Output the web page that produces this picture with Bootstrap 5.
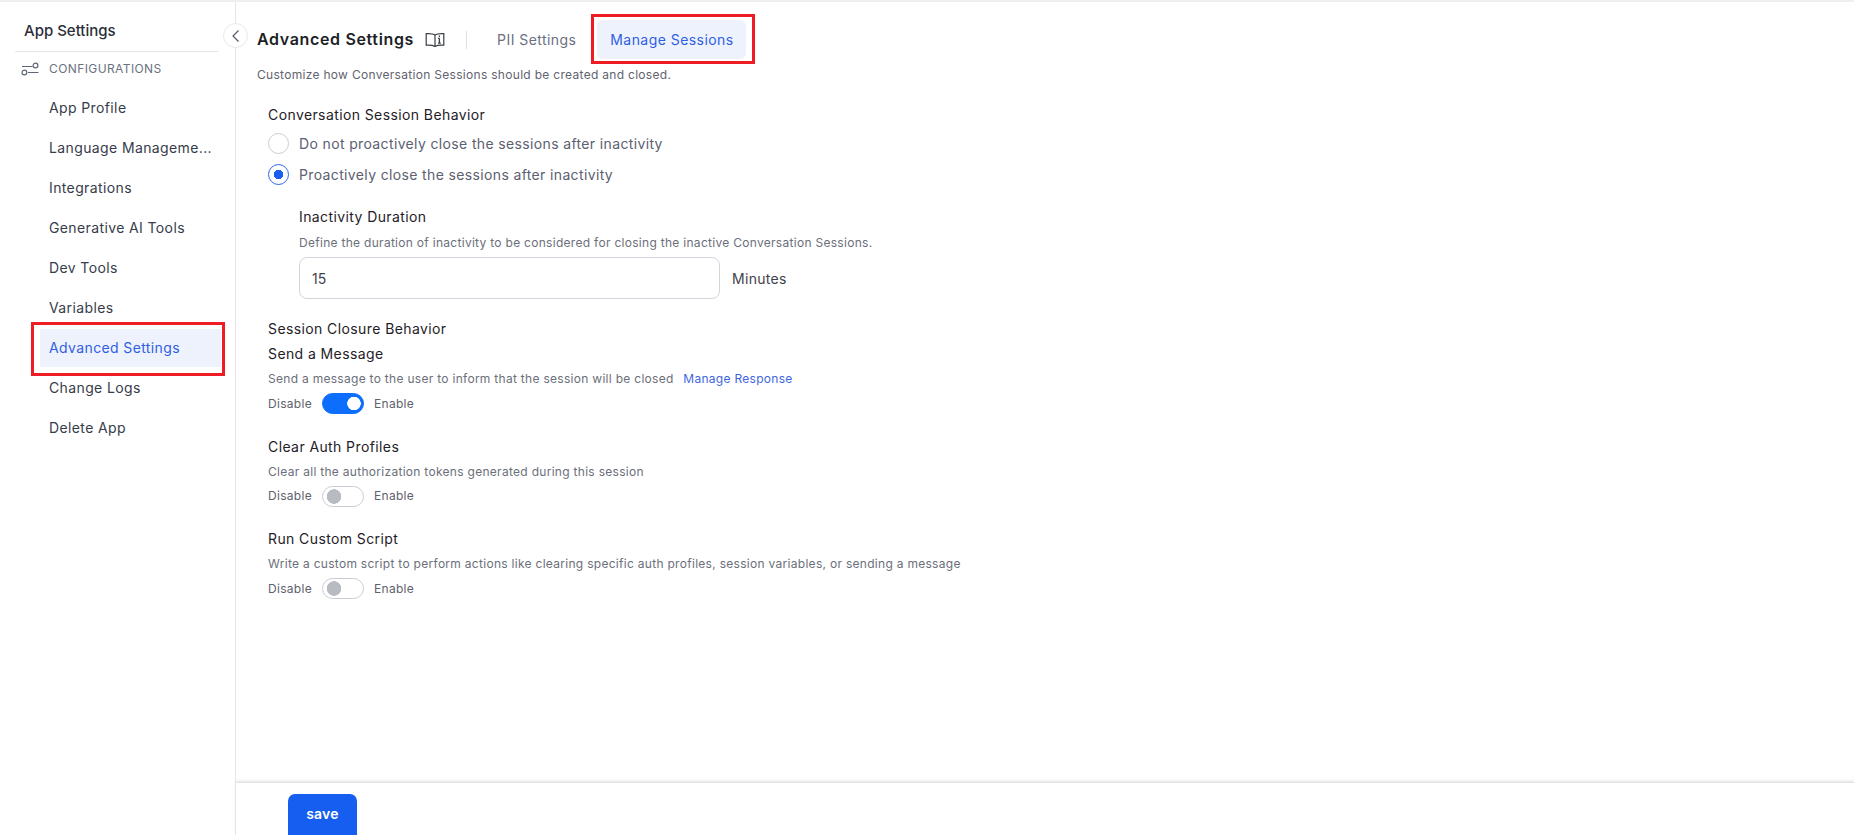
<!DOCTYPE html>
<html lang="en">
<head>
<meta charset="utf-8">
<title>App Settings</title>
<link href="https://cdn.jsdelivr.net/npm/bootstrap@5.3.0/dist/css/bootstrap.min.css" rel="stylesheet">
<style>
html,body{height:835px;overflow:hidden}
body{font-family:Inter,"Liberation Sans",sans-serif;color:#202124;background:#fff;font-size:14px}
.shell{height:835px;border-top:2px solid #eeeff1}
.side{width:236px;flex:none;border-right:1px solid #e4e6ea;position:relative;padding:0 17px 0 15px}
.side-title{font-size:15px;font-weight:500;color:#2b2f38;line-height:22px;padding:18px 0 9px 9px;border-bottom:1px solid #e4e6ea}
.collapse-btn{position:absolute;top:21px;right:-13px;width:25px;height:25px;border:1px solid #e8e9ed;border-radius:50%;background:#fff;padding:0;display:flex;align-items:center;justify-content:center}
.group-head{height:34px;padding-left:6px;gap:10px;font-size:12px;color:#6b7280;letter-spacing:.4px}
.menu{margin-top:3px;margin-left:25px;margin-right:-3px}
.menu-link{display:block;height:38px;margin-bottom:2px;line-height:38px;padding:0 0 0 9px;color:#363c4a;font-size:14px;font-weight:400;letter-spacing:.38px;white-space:nowrap;text-decoration:none;position:relative}
.menu-link.is-active{background:#eef2fd;color:#2f5fe3}
.mark-box{position:absolute;border:3px solid #ee1c25;pointer-events:none}
.menu-mark{top:-7px;left:-9px;right:-4px;bottom:-9px}
.tab-mark{top:-6px;left:-6px;right:-9px;bottom:-5px}
.main{min-width:0}
.content{padding:18px 21px 0 21px}
.head-row{height:39px}
.page-title{font-size:16px;font-weight:600;color:#1d1f25;margin:0;line-height:39px;letter-spacing:.65px}
.book-ico{margin-left:11px}
.vrule{width:1px;height:18px;background:#dfe1e6;margin:0 30px 0 21px}
.tab-plain{padding:0;color:#6a7080;font-size:14px;font-weight:400;letter-spacing:.45px;text-decoration:none;margin-right:21px}
.tab-on{display:block;position:relative;width:149px;height:39px;line-height:39px;text-align:center;background:#eef2fd;border-radius:6px;color:#2f5fe3;font-size:14px;font-weight:400;letter-spacing:.45px;text-decoration:none}
.subtitle{font-size:12px;color:#5f6470;line-height:16px;margin:8px 0 0;letter-spacing:.3px}
.form-area{padding-left:11px}
.label-main{font-size:14px;font-weight:400;color:#1f2127;line-height:20px;margin:0;letter-spacing:.4px}
.lead-label{margin-top:22px}
.hint{font-size:12px;color:#6b6f7a;line-height:16px;margin:0;letter-spacing:.29px}
.hint a{color:#3f66e0;text-decoration:none;margin-left:6px}
.radio-row{display:flex;align-items:center;gap:10px;height:31px;margin:0;padding:0;color:#5c6070;font-size:14px;letter-spacing:.36px}
.radio-group{margin-top:3px}
.radio-row .form-check-input{width:21px;height:21px;margin:0;flex:none;border:1px solid #c9ccd3;float:none}
.radio-row .form-check-input:checked{background-color:#fff;border-color:#2a66f0;background-image:radial-gradient(circle,#1a5ff0 0 4.5px,transparent 5px)}
.dur{padding-left:31px;margin-top:17px}
.dur .hint{margin-top:8px}
.dur-row{margin-top:6px;gap:12px;font-size:14px;color:#3f424c;letter-spacing:.3px}
.dur-input{width:421px;height:42px;border:1px solid #d3d5dc;border-radius:8px;padding:0 12px;font-size:14px;color:#3f424c;font-family:inherit}
.closure{margin-top:20px}
.blk{margin-top:5px}
.blk+.blk{margin-top:22px}
.blk .hint{margin-top:7px}
.tog-row{margin-top:5.5px;height:22px;font-size:12px;color:#5e626d;gap:10px;letter-spacing:.3px}
.tog-row .form-switch{padding:0;margin:0;min-height:0;display:flex}
.tog-row .form-check-input{width:42px;height:21px;margin:0;float:none;border:1px solid #c9ccd3;border-radius:11px;background-color:#fff;background-image:radial-gradient(circle at 11px 50%,#b9bbc2 0 7px,transparent 7.5px);background-size:auto;background-position:0 0}
.tog-row .form-check-input:checked{background-color:#0d6efd;border-color:#0d6efd;background-image:radial-gradient(circle at 31px 50%,#fff 0 6.5px,transparent 7px)}
.bottom{height:53px;overflow:hidden;border-top:1px solid #e2e3e6;box-shadow:0 -1px 3px rgba(0,0,0,.12);padding:11px 0 0 52px;flex:none}
.save-btn{width:69px;height:52px;background:#155eef;border:0;border-radius:7px;color:#fff;font-size:14px;font-weight:600;letter-spacing:.2px;padding:0 0 14px;display:block}
</style>
</head>
<body>
<div class="shell d-flex">
  <aside class="side">
    <div class="side-title">App Settings</div>
    <button class="collapse-btn" type="button" aria-label="Collapse">
      <svg width="10" height="14" viewBox="0 0 10 14" fill="none" stroke="#4b5060" stroke-width="1.1"><path d="M7.5 1.5 2 7l5.5 5.5"/></svg>
    </button>
    <div class="group-head d-flex align-items-center">
      <svg width="18" height="14" viewBox="0 0 18 14" fill="none" stroke="#5f6675" stroke-width="1.2"><path d="M1 4.5h10.5M7 10.5h10.5"/><circle cx="14.5" cy="3.5" r="2.4"/><circle cx="3.4" cy="10.5" r="2.4"/></svg>
      <span>CONFIGURATIONS</span>
    </div>
    <nav class="nav flex-column menu">
      <a class="menu-link" href="#">App Profile</a>
      <a class="menu-link" href="#">Language Manageme...</a>
      <a class="menu-link" href="#">Integrations</a>
      <a class="menu-link" href="#">Generative AI Tools</a>
      <a class="menu-link" href="#">Dev Tools</a>
      <a class="menu-link" href="#">Variables</a>
      <a class="menu-link is-active" href="#">Advanced Settings<span class="mark-box menu-mark"></span></a>
      <a class="menu-link" href="#">Change Logs</a>
      <a class="menu-link" href="#">Delete App</a>
    </nav>
  </aside>
  <main class="main flex-grow-1 d-flex flex-column">
    <div class="content flex-grow-1">
      <div class="head-row d-flex align-items-center">
        <h1 class="page-title">Advanced Settings</h1>
        <svg class="book-ico" width="20" height="16" viewBox="0 0 20 16" fill="none" stroke="#3a3d46" stroke-width="1.2"><path d="M10 3C8.5 1.8 6 1.4 1.2 1.6v11.6c4.6-.2 7 .1 8.8 1.3 1.8-1.2 4.2-1.5 8.8-1.3V1.6C14 1.4 11.5 1.8 10 3zM10 3v11.5"/><path d="M14.4 3.4v1.5M14.4 6.3v4.9M13 11.2h2.8M13 6.3h1.4" stroke-width="1.3"/></svg>
        <span class="vrule"></span>
        <a class="tab-plain" href="#">PII Settings</a>
        <a class="tab-on" href="#">Manage Sessions<span class="mark-box tab-mark"></span></a>
      </div>
      <p class="subtitle">Customize how Conversation Sessions should be created and closed.</p>
      <div class="form-area">
        <p class="label-main lead-label">Conversation Session Behavior</p>
        <div class="radio-group">
          <label class="radio-row form-check"><input class="form-check-input" type="radio" name="closing"><span>Do not proactively close the sessions after inactivity</span></label>
          <label class="radio-row form-check"><input class="form-check-input" type="radio" name="closing" checked><span>Proactively close the sessions after inactivity</span></label>
        </div>
        <div class="dur">
          <p class="label-main">Inactivity Duration</p>
          <p class="hint">Define the duration of inactivity to be considered for closing the inactive Conversation Sessions.</p>
          <div class="dur-row d-flex align-items-center">
            <input class="form-control dur-input" type="text" value="15" aria-label="Inactivity Duration">
            <span>Minutes</span>
          </div>
        </div>
        <div class="closure">
          <p class="label-main">Session Closure Behavior</p>
          <div class="blk">
            <p class="label-main">Send a Message</p>
            <p class="hint">Send a message to the user to inform that the session will be closed <a href="#">Manage Response</a></p>
            <div class="tog-row d-flex align-items-center"><span>Disable</span><div class="form-check form-switch"><input class="form-check-input" type="checkbox" role="switch" checked aria-label="Send a Message"></div><span>Enable</span></div>
          </div>
          <div class="blk">
            <p class="label-main">Clear Auth Profiles</p>
            <p class="hint">Clear all the authorization tokens generated during this session</p>
            <div class="tog-row d-flex align-items-center"><span>Disable</span><div class="form-check form-switch"><input class="form-check-input" type="checkbox" role="switch" aria-label="Clear Auth Profiles"></div><span>Enable</span></div>
          </div>
          <div class="blk">
            <p class="label-main">Run Custom Script</p>
            <p class="hint">Write a custom script to perform actions like clearing specific auth profiles, session variables, or sending a message</p>
            <div class="tog-row d-flex align-items-center"><span>Disable</span><div class="form-check form-switch"><input class="form-check-input" type="checkbox" role="switch" aria-label="Run Custom Script"></div><span>Enable</span></div>
          </div>
        </div>
      </div>
    </div>
    <div class="bottom"><button class="btn save-btn" type="button">save</button></div>
  </main>
</div>
<script src="https://cdn.jsdelivr.net/npm/bootstrap@5.3.0/dist/js/bootstrap.bundle.min.js"></script>
</body>
</html>
